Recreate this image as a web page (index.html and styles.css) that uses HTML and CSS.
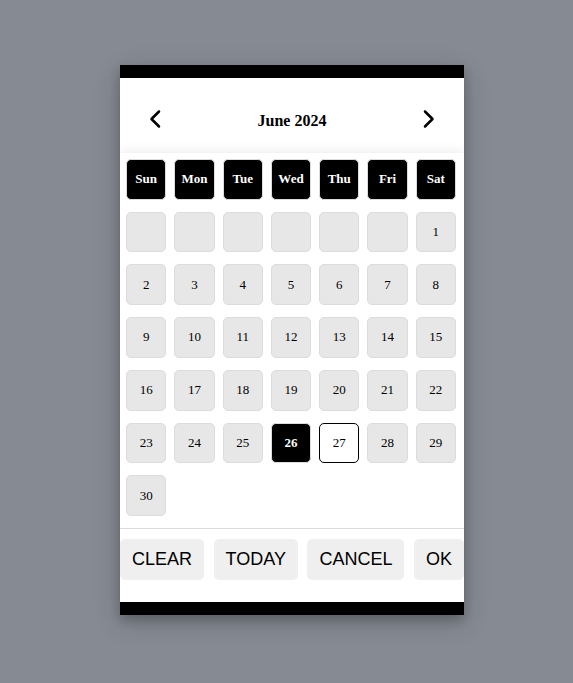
FILE: index.html
```html
<!DOCTYPE html>
<html lang="en">
<head>
<meta charset="utf-8">
<meta name="viewport" content="width=device-width, initial-scale=1">
<title>Date picker</title>
<link rel="stylesheet" href="styles.css">
</head>
<body>
<main class="picker">
  <header class="picker-header">
    <button class="nav" type="button" aria-label="Previous month">
      <svg viewBox="0 0 12 20" width="12" height="20"><path d="M10 2.500L2.500 10L10 17.500"/></svg>
    </button>
    <h1 class="title">June 2024</h1>
    <button class="nav" type="button" aria-label="Next month">
      <svg viewBox="0 0 12 20" width="12" height="20"><path d="M2 2.500L9.500 10L2 17.500"/></svg>
    </button>
  </header>
  <section class="month">
    <table class="days">
      <thead>
        <tr><th>Sun</th><th>Mon</th><th>Tue</th><th>Wed</th><th>Thu</th><th>Fri</th><th>Sat</th></tr>
      </thead>
      <tbody>
        <tr><td class="blank"></td><td class="blank"></td><td class="blank"></td><td class="blank"></td><td class="blank"></td><td class="blank"></td><td><button type="button">1</button></td></tr>
        <tr><td><button type="button">2</button></td><td><button type="button">3</button></td><td><button type="button">4</button></td><td><button type="button">5</button></td><td><button type="button">6</button></td><td><button type="button">7</button></td><td><button type="button">8</button></td></tr>
        <tr><td><button type="button">9</button></td><td><button type="button">10</button></td><td><button type="button">11</button></td><td><button type="button">12</button></td><td><button type="button">13</button></td><td><button type="button">14</button></td><td><button type="button">15</button></td></tr>
        <tr><td><button type="button">16</button></td><td><button type="button">17</button></td><td><button type="button">18</button></td><td><button type="button">19</button></td><td><button type="button">20</button></td><td><button type="button">21</button></td><td><button type="button">22</button></td></tr>
        <tr><td><button type="button">23</button></td><td><button type="button">24</button></td><td><button type="button">25</button></td><td><button type="button" class="selected">26</button></td><td><button type="button" class="today">27</button></td><td><button type="button">28</button></td><td><button type="button">29</button></td></tr>
        <tr><td><button type="button">30</button></td></tr>
      </tbody>
    </table>
  </section>
  <footer class="actions">
    <button type="button">CLEAR</button>
    <button type="button">TODAY</button>
    <button type="button">CANCEL</button>
    <button type="button">OK</button>
  </footer>
</main>
</body>
</html>
```
FILE: styles.css
```css
* {
  box-sizing: border-box;
}

body {
  margin: 0;
  min-height: 100vh;
  padding: 65px 0 64px 11px;
  background: #868a93;
  color: #000;
  font-family: "Liberation Serif", "Times New Roman", serif;
}

button {
  margin: 0;
  padding: 0;
  border: 0;
  color: inherit;
  font: inherit;
  cursor: pointer;
}

.picker {
  width: 100%;
  max-width: 344px;
  margin: 0 auto;
  border-top: 13px solid #000;
  border-bottom: 13px solid #000;
  background: #fff;
  box-shadow: 0 5px 10px rgba(0, 0, 0, 0.2), 0 7px 25px rgba(0, 0, 0, 0.19);
}

.picker-header {
  display: flex;
  align-items: center;
  justify-content: space-between;
  padding: 10px 29px 0;
  height: 75px;
  overflow: hidden;
}

.nav {
  display: flex;
  padding-bottom: 4px;
  background: none;
}

.nav svg {
  fill: none;
  stroke: #000;
  stroke-width: 2.5;
  stroke-linecap: round;
  stroke-linejoin: round;
}

.title {
  margin: 0;
  font-size: 16px;
  line-height: 20px;
}

.month {
  padding: 6px 8px 12px 6px;
  background: #fff;
  border-bottom: 1px solid #dcdcdc;
  box-shadow: 0 0 12px rgba(0, 0, 0, 0.1);
  clip-path: inset(-12px 0 0 0);
}

.days {
  display: grid;
  grid-template-columns: repeat(7, 1fr);
  grid-template-rows: repeat(7, 1fr);
  gap: 12px 8px;
  width: 100%;
  min-height: 357px;
  font-size: 13px;
  line-height: 16px;
}

.days thead,
.days tbody,
.days tr {
  display: contents;
}

.days th,
.days td {
  display: grid;
  padding: 0;
}

.days th,
.days .blank,
.days button {
  border: 1px solid #dcdcdc;
  border-radius: 5px;
  background: #e7e7e7;
}

.days th {
  align-content: center;
  background: #000;
  color: #fff;
}

.days .selected {
  background: #000;
  color: #fff;
  font-weight: bold;
}

.days .today {
  border-color: #000;
  background: #fff;
}

.actions {
  display: flex;
  justify-content: space-between;
  padding: 10px 0 22px;
}

.actions button {
  padding: 10px 12px;
  border-radius: 5px;
  background: #efefef;
  font-family: "Liberation Sans", Arial, sans-serif;
  font-size: 18px;
  line-height: 21px;
}
```
